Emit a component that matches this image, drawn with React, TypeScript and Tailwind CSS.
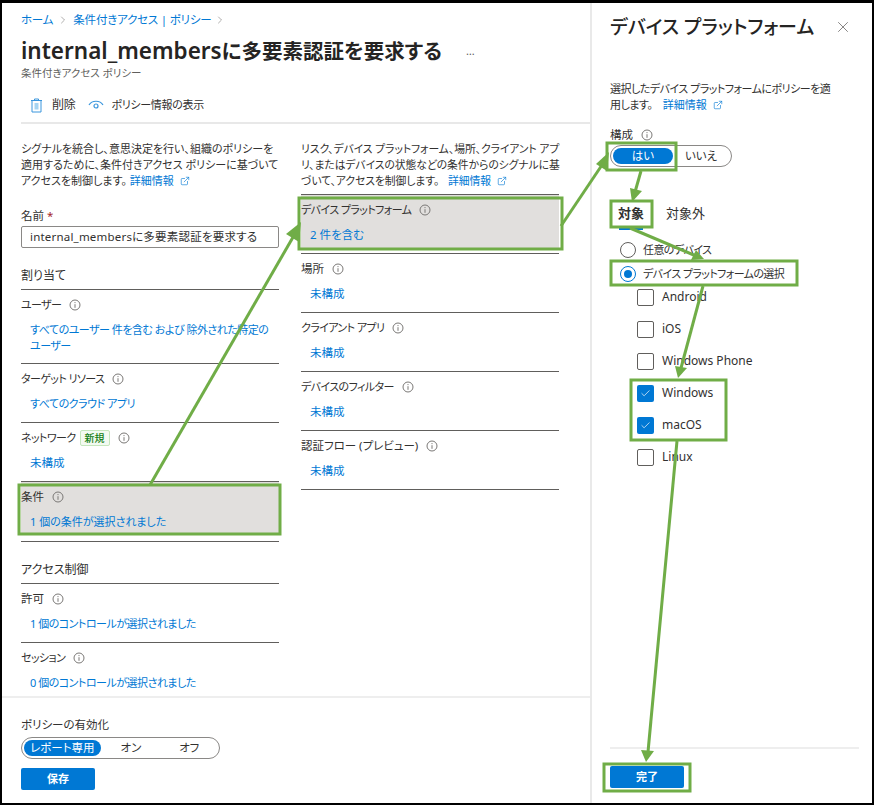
import type { ReactNode } from 'react';
import { ExternalLink, X, Check, ChevronRight } from 'lucide-react';

const InfoIcon = () => (
  <svg width="12" height="12" viewBox="0 0 12 12" fill="none" className="shrink-0">
    <circle cx="6" cy="6" r="5" stroke="#7a7876" strokeWidth="1" />
    <path d="M6 5.2V8.8" stroke="#7a7876" strokeWidth="1" />
    <circle cx="6" cy="3.6" r="0.6" fill="#7a7876" />
  </svg>
);

const MoreLink = ({ className = '' }: { className?: string }) => (
  <span className={`text-[#0078d4] whitespace-nowrap ${className}`}>
    詳細情報
    <ExternalLink size={10} strokeWidth={1.5} className="inline-block ml-[6px] -mt-[2px]" />
  </span>
);

const Row = ({
  label,
  value,
  selected,
  badge,
  tall,
  kanaLabel,
  kanaValue,
}: {
  label: string;
  value: ReactNode;
  selected?: boolean;
  badge?: boolean;
  tall?: boolean;
  kanaLabel?: boolean;
  kanaValue?: boolean;
}) => (
  <div className={`border-t border-[#605e5c] ${tall ? 'h-[74px]' : 'h-[59px]'}`}>
    <div className={`pt-[7px] pb-[5px] ${selected ? 'bg-[#e1dfdd]' : ''}`}>
      <div className="flex items-center h-4 gap-[8px]">
        <span className={kanaLabel ? 'text-[11px] tracking-[-0.6px]' : ''}>{label}</span>
        {badge && (
          <span className="h-[16px] px-[4px] -ml-[4px] text-[10px] leading-[14px] font-medium border border-[#c5e6bd] rounded-[2px] bg-[#f3faf1] text-[#107c10]">
            新規
          </span>
        )}
        <InfoIcon />
      </div>
      <div className={`mt-[9px] pl-[9px] text-[#0078d4] whitespace-nowrap ${kanaValue ? 'text-[11px] tracking-[-0.5px]' : ''}`}>
        {value}
      </div>
    </div>
  </div>
);

const Checkbox = ({ label, checked }: { label: string; checked?: boolean }) => (
  <div className="flex items-center h-[32px] pl-[27px] gap-[8px] font-['Noto_Sans',sans-serif] text-[12px]">
    {checked ? (
      <span className="w-[17px] h-[17px] rounded-[2px] bg-[#0078d4] flex items-center justify-center">
        <Check size={11} strokeWidth={1.5} color="#ffffff" />
      </span>
    ) : (
      <span className="w-[17px] h-[17px] rounded-[2px] border border-[#605e5c]" />
    )}
    <span className="text-[#323130]">{label}</span>
  </div>
);

export default function App() {
  return (
    <div className="relative w-[874px] h-[805px] overflow-hidden bg-white text-[#323130] text-[11.5px] leading-4 [font-feature-settings:'palt'] font-['Noto_Sans','Noto_Sans_CJK_JP',sans-serif] border-black border-l-2 border-r-2 border-t-[3px] border-b-[2px]">
      <div className="flex h-full">
        {/* policy blade */}
        <div className="w-[588px] h-full flex flex-col shrink-0">
          <div className="pl-[19px] pt-[9px]">
            <div className="flex items-center h-4 text-[#0078d4] text-[11.5px] tracking-[-0.2px] gap-[3px]">
              <span>ホーム</span>
              <ChevronRight size={12} strokeWidth={1} color="#605e5c" className="mx-[1px]" />
              <span>条件付きアクセス | ポリシー</span>
              <ChevronRight size={12} strokeWidth={1} color="#605e5c" />
            </div>
            <div className="mt-[7px] h-8 flex items-center">
              <h1 className="text-[22.5px] leading-8 font-semibold text-[#252423] whitespace-nowrap">
                internal_members<span className="text-[20.5px]">に多要素認証を要求する</span>
              </h1>
              <span className="ml-[24px] text-[#605e5c] text-[11px]">…</span>
            </div>
            <div className="text-[10.5px] leading-3 text-[#605e5c]">条件付きアクセス ポリシー</div>
            <div className="mt-[9px] h-[36px] flex items-center border-b-2 border-[#e8e8e8] pl-[9px] text-[11px] tracking-[-0.3px]">
              <svg width="13" height="15" viewBox="0 0 13 15" fill="none">
                <path d="M1 2.5H12M4.5 2.5V1H8.5V2.5M2 2.5H11V14H2Z" stroke="#3a96dd" strokeWidth="1" />
                <path d="M4.5 5V11.5H8.5V5Z" fill="#a6d4f2" />
              </svg>
              <span className="ml-[9px] text-[12px]">削除</span>
              <svg width="16" height="12" viewBox="0 0 16 12" fill="none" className="ml-[13px]">
                <path d="M1 6C4 1 12 1 15 6" stroke="#3a96dd" strokeWidth="1.2" />
                <circle cx="8" cy="7" r="2" stroke="#3a96dd" strokeWidth="1.2" />
              </svg>
              <span className="ml-[7px]">ポリシー情報の表示</span>
            </div>
          </div>

          <div className="flex-1 min-h-0 overflow-hidden flex gap-[22px] pl-[19px] pt-[17px]">
            <div className="w-[258px] shrink-0">
              <p className="h-12 whitespace-nowrap text-[11px]">
                シグナルを統合し、意思決定を行い、組織のポリシーを
                <br />
                適用するために、条件付きアクセス ポリシーに基づいて
                <br />
                アクセスを制御します。 <MoreLink />
              </p>
              <div className="mt-[19px] h-4">
                名前 <span className="text-[#a4262c]">*</span>
              </div>
              <div className="mt-[2px] h-[22px] border border-[#8a8886] rounded-[2px] px-[8px] tracking-[0.2px] leading-5 whitespace-nowrap">
                internal_membersに多要素認証を要求する
              </div>
              <div className="mt-[20px] h-4 text-[12px]">割り当て</div>
              <div className="h-[5px]" />
              <Row
                tall
                kanaLabel
                kanaValue
                label="ユーザー"
                value={
                  <>
                    すべてのユーザー 件を含む および 除外された特定の
                    <br />
                    ユーザー
                  </>
                }
              />
              <Row kanaLabel kanaValue label="ターゲット リソース" value="すべてのクラウド アプリ" />
              <Row kanaLabel badge label="ネットワーク" value="未構成" />
              <Row selected label="条件" value={<span className="text-[11px]">1 個の条件が選択されました</span>} />
              <div className="border-t border-[#605e5c] mt-px h-[22px]" />
              <div className="h-4 text-[12px] -mt-[1px]">アクセス制御</div>
              <div className="h-[5px]" />
              <Row kanaValue label="許可" value="1 個のコントロールが選択されました" />
              <Row kanaLabel kanaValue label="セッション" value="0 個のコントロールが選択されました" />
            </div>
            <div className="w-[258px] shrink-0">
              <p className="h-12 whitespace-nowrap text-[10.8px] tracking-[-0.05px]">
                リスク、デバイス プラットフォーム、場所、クライアント アプ
                <br />
                リ、またはデバイスの状態などの条件からのシグナルに基
                <br />
                づいて、アクセスを制御します。 <MoreLink className="ml-[6px]" />
              </p>
              <div className="h-[5px]" />
              <Row selected kanaLabel label="デバイス プラットフォーム" value="2 件を含む" />
              <Row label="場所" value="未構成" />
              <Row kanaLabel label="クライアント アプリ" value="未構成" />
              <Row kanaLabel label="デバイスのフィルター" value="未構成" />
              <Row label="認証フロー (プレビュー)" value="未構成" />
              <div className="border-t border-[#605e5c]" />
            </div>
          </div>

          <div className="h-[107px] shrink-0 border-t-2 border-[#eeeeee] pl-[19px] pt-[19px]">
            <div className="h-4 text-[11.5px]">ポリシーの有効化</div>
            <div className="mt-[4px] w-[199px] h-[22px] rounded-full border border-[#8a8886] flex items-center p-[2px]">
              <span className="w-[77px] h-4 rounded-full bg-[#0078d4] text-white text-center">レポート専用</span>
              <span className="w-[61px] text-center">オン</span>
              <span className="w-[56px] text-center">オフ</span>
            </div>
            <button className="mt-[9px] block w-[74px] h-[22px] rounded-[2px] bg-[#0078d4] text-white font-bold text-[11px]">
              保存
            </button>
          </div>
        </div>

        {/* device platform panel */}
        <div className="flex-1 h-full flex flex-col bg-white border-l-2 border-[#e9e9e9] pl-[18px]">
          <div className="flex items-center justify-between h-[30px] mt-[9px] pr-[20px]">
            <h2 className="text-[19px] font-medium text-[#252423] whitespace-nowrap">デバイス プラットフォーム</h2>
            <X size={18} strokeWidth={1} color="#605e5c" />
          </div>
          <p className="mt-[39px] h-8 whitespace-nowrap text-[11px] tracking-[-0.5px]">
            選択したデバイス プラットフォームにポリシーを適
            <br />
            用します。 <MoreLink className="ml-[8px] tracking-normal" />
          </p>
          <div className="mt-[14px] flex items-center h-4 gap-[8px]">
            <span>構成</span>
            <InfoIcon />
          </div>
          <div className="mt-[2px] w-[122px] h-[22px] rounded-full border border-[#8a8886] flex items-center p-[2px]">
            <span className="w-[60px] h-4 rounded-full bg-[#0078d4] text-white text-center">はい</span>
            <span className="flex-1 text-center">いいえ</span>
          </div>
          <div className="mt-[38px] flex h-4 gap-[22px] text-[13px]">
            <span className="font-semibold pl-[8px]">対象</span>
            <span>対象外</span>
          </div>
          <div className="ml-[9px] mt-[7px] w-[24px] h-[2px] bg-[#0078d4]" />
          <div className="flex items-center h-[24px] mt-[8px] gap-[7px] pl-[10px] text-[11px] tracking-[-0.6px]">
            <span className="w-[16px] h-[16px] rounded-full border border-[#605e5c]" />
            <span>任意のデバイス</span>
          </div>
          <div className="flex items-center h-[24px] gap-[7px] pl-[10px] text-[11px] tracking-[-0.6px]">
            <span className="w-[16px] h-[16px] rounded-full border border-[#0078d4] flex items-center justify-center">
              <span className="w-[8px] h-[8px] rounded-full bg-[#0078d4]" />
            </span>
            <span>デバイス プラットフォームの選択</span>
          </div>
          <div className="mt-[-5px]">
            <Checkbox label="Android" />
            <Checkbox label="iOS" />
            <Checkbox label="Windows Phone" />
            <Checkbox checked label="Windows" />
            <Checkbox checked label="macOS" />
            <Checkbox label="Linux" />
          </div>
          <div className="mt-auto h-[56px] shrink-0 mr-[13px] border-t-2 border-[#eeeeee] pt-[17px]">
            <button className="block w-[74px] h-[22px] rounded-[2px] bg-[#0078d4] text-white font-bold text-[11px]">
              完了
            </button>
          </div>
        </div>
      </div>

      {/* green annotations drawn over the screenshot */}
      <svg
        width="874"
        height="805"
        viewBox="0 0 874 805"
        fill="none"
        className="absolute -left-[2px] -top-[3px] pointer-events-none"
      >
        <g stroke="#70ad47" strokeWidth="3">
          <rect x="19" y="485" width="261" height="49" />
          <rect x="299" y="198" width="263" height="51" />
          <rect x="607" y="143" width="69" height="27" />
          <rect x="611" y="201" width="41" height="26" />
          <rect x="611" y="261" width="186" height="24" />
          <rect x="631" y="380" width="95" height="60" />
          <rect x="604" y="764" width="86" height="27" />
          <path d="M150 485L296 232" />
          <path d="M561 226L604 162" />
          <path d="M641 171L635 192" />
          <path d="M630 228L696 256" />
          <path d="M703 286L681 368" />
          <path d="M677 441L648 752" />
        </g>
        <g fill="#70ad47">
          <path d="M301 222L299 242L286 234Z" />
          <path d="M609 152L607 171L596 164Z" />
          <path d="M632 202L630 188L642 191Z" />
          <path d="M704 259L691 260L696 250Z" />
          <path d="M678 378L675 366L687 368Z" />
          <path d="M646 762L641 750L654 751Z" />
        </g>
      </svg>
    </div>
  );
}
